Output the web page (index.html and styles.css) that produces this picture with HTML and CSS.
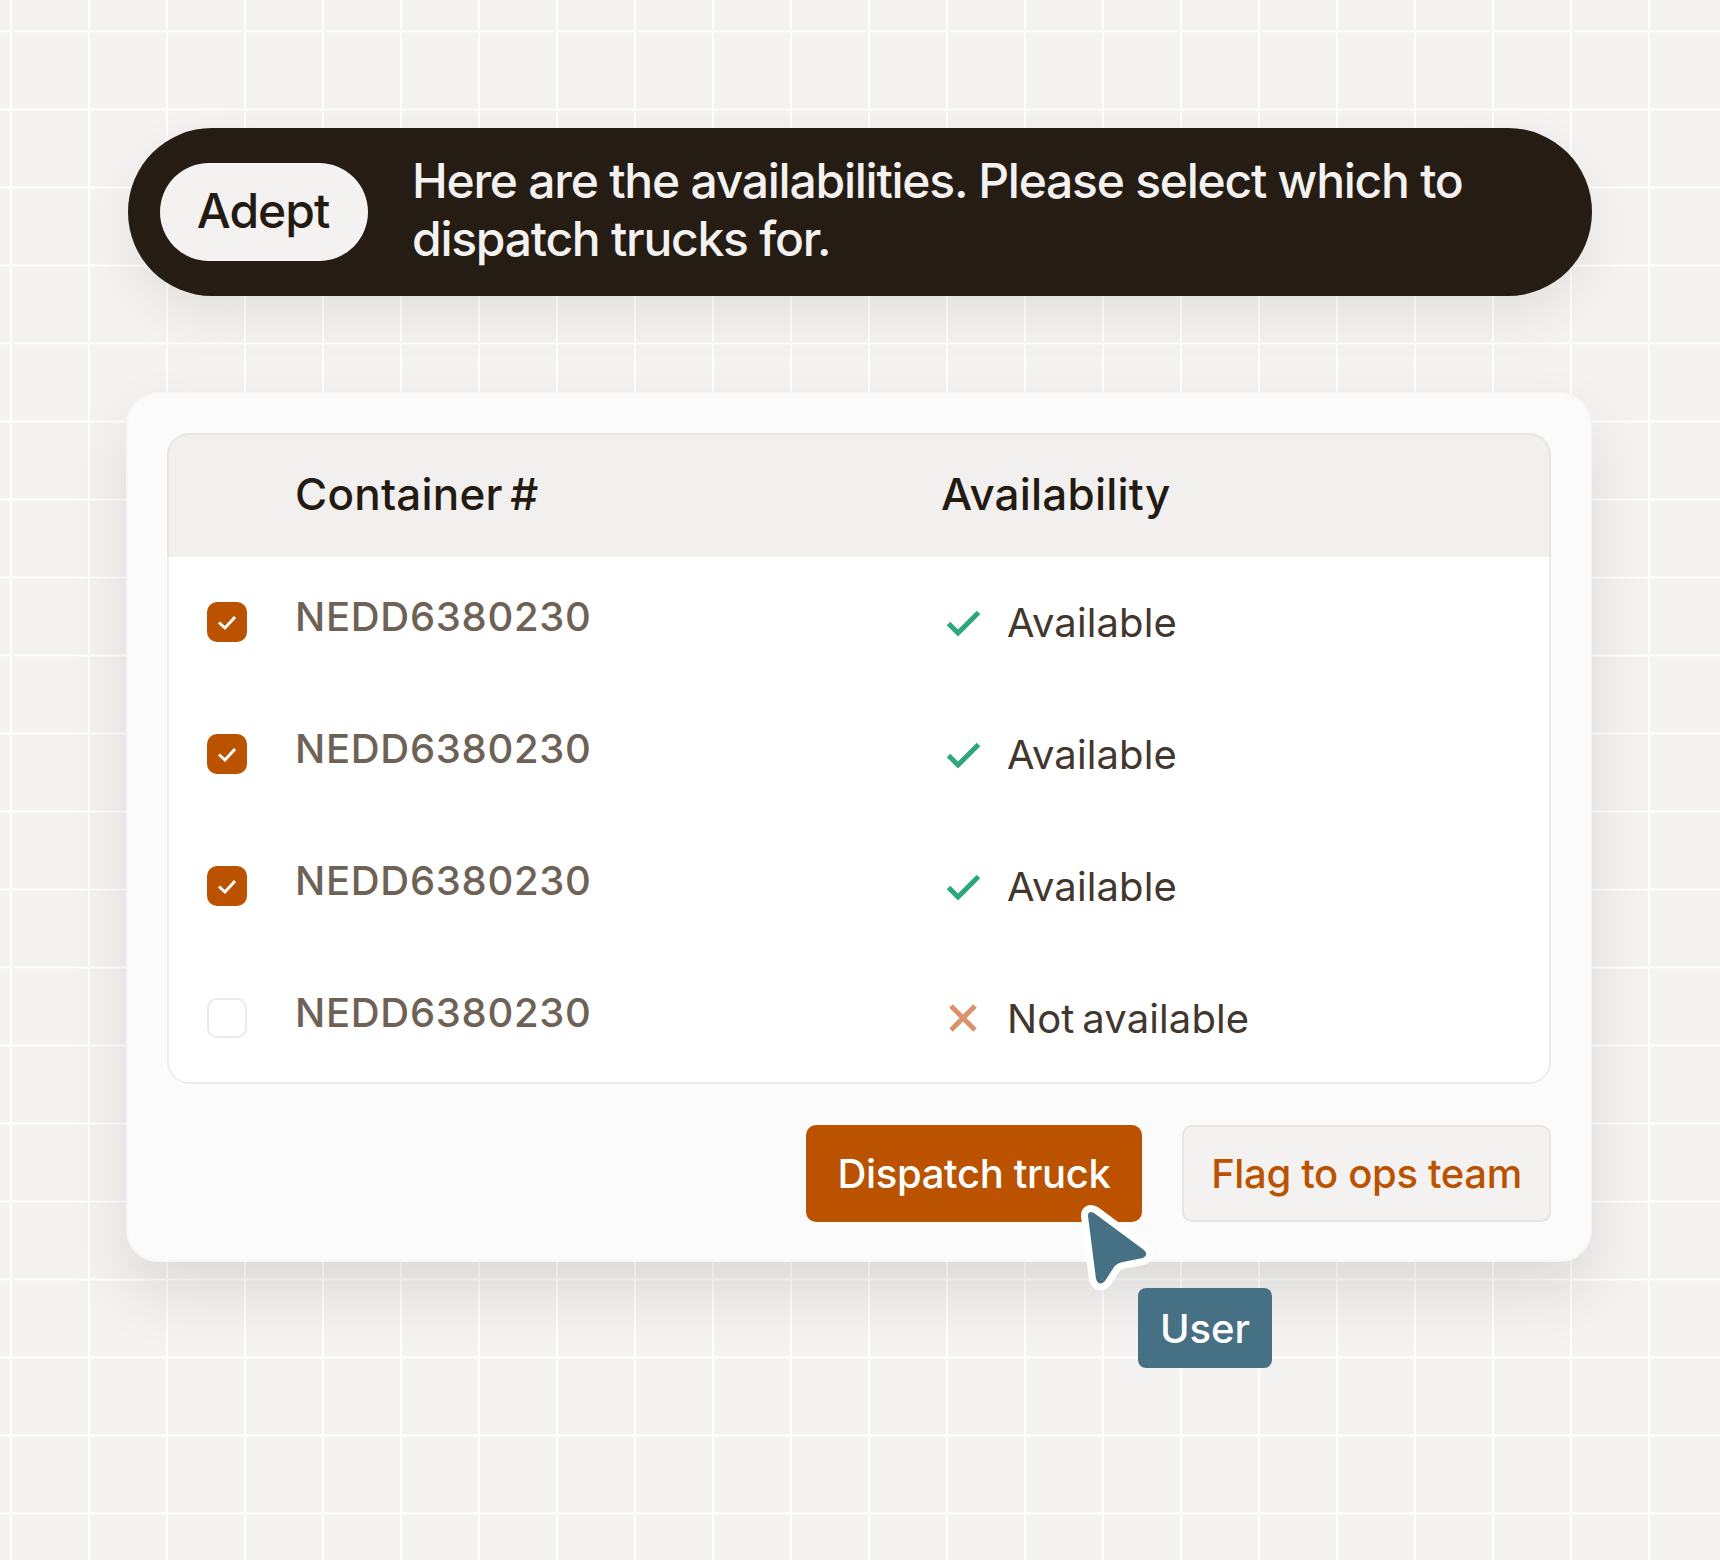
FILE: index.html
```html
<!DOCTYPE html>
<html lang="en">
<head>
<meta charset="utf-8">
<title>Adept dispatch</title>
<link rel="stylesheet" href="styles.css">
</head>
<body>
<main class="page">
  <section class="message">
    <span class="agent">Adept</span>
    <p class="message-text">Here are the availabilities. Please select which to dispatch trucks for.</p>
  </section>
  <section class="card">
    <div class="table">
      <div class="row head">
        <span></span>
        <span>Container #</span>
        <span>Availability</span>
      </div>
      <div class="rows">
        <div class="row">
          <span class="box on"><svg viewBox="0 0 40 40" class="tick"><path d="M12 20.5 L18 26 L28 15"/></svg></span>
          <span class="id">NEDD6380230</span>
          <span class="status"><svg viewBox="0 0 44 44" class="ok"><path d="M7.5 23.5 L17 33 L37.5 12.5"/></svg>Available</span>
        </div>
        <div class="row">
          <span class="box on"><svg viewBox="0 0 40 40" class="tick"><path d="M12 20.5 L18 26 L28 15"/></svg></span>
          <span class="id">NEDD6380230</span>
          <span class="status"><svg viewBox="0 0 44 44" class="ok"><path d="M7.5 23.5 L17 33 L37.5 12.5"/></svg>Available</span>
        </div>
        <div class="row">
          <span class="box on"><svg viewBox="0 0 40 40" class="tick"><path d="M12 20.5 L18 26 L28 15"/></svg></span>
          <span class="id">NEDD6380230</span>
          <span class="status"><svg viewBox="0 0 44 44" class="ok"><path d="M7.5 23.5 L17 33 L37.5 12.5"/></svg>Available</span>
        </div>
        <div class="row">
          <span class="box"></span>
          <span class="id">NEDD6380230</span>
          <span class="status"><svg viewBox="0 0 44 44" class="no"><path d="M10 10 L34 34 M34 10 L10 34"/></svg>Not available</span>
        </div>
      </div>
    </div>
    <div class="actions">
      <button class="btn primary">Dispatch truck</button>
      <button class="btn secondary">Flag to ops team</button>
      <svg class="cursor" viewBox="0 0 80 90"><path d="M9 13 Q9 7 15 10 L65 47 Q70 52 64 55 L44 59 Q38 60 35 64 L26 78 Q20 84 17 76 Z"/></svg>
      <span class="user">User</span>
    </div>
  </section>
</main>
</body>
</html>
```
FILE: styles.css
```css
* { box-sizing: border-box; }
html, body { margin: 0; }
body {
  width: 1720px;
  height: 1560px;
  overflow: hidden;
  background-color: #f4f3f1;
  background-image:
    linear-gradient(to right, #fefefe 2px, transparent 2px),
    linear-gradient(to bottom, #fefefe 2px, transparent 2px);
  background-size: 78px 78px;
  background-position: 10px 30.5px;
  font-family: Inter, "Liberation Sans", sans-serif;
  color: #231a12;
}
.page {
  padding: 128px 128px 0 128px;
  display: flex;
  flex-direction: column;
  gap: 96px;
}
.message {
  height: 168px;
  border-radius: 84px;
  background: #251c13;
  box-shadow: 0 20px 50px rgba(60, 50, 40, 0.09);
  padding: 0 32px;
  display: flex;
  align-items: center;
  gap: 44px;
}
.agent {
  flex: none;
  width: 208px;
  height: 98px;
  padding: 0 2px 4px 0;
  border-radius: 49px;
  background: #f3f2f0;
  font-size: 48px;
  font-weight: 500;
  letter-spacing: -1px;
  display: flex;
  align-items: center;
  justify-content: center;
}
.message-text {
  margin: -4px 0 0;
  color: #f3f2f0;
  font-size: 48px;
  font-weight: 500;
  line-height: 58px;
  letter-spacing: -1.25px;
}
.card {
  margin-left: -2px;
  height: 870px;
  padding: 39px;
  border: 2px solid #f7f6f6;
  border-radius: 32px;
  background: #fbfbfb;
  box-shadow: 0 30px 60px rgba(60, 50, 40, 0.12);
  display: flex;
  flex-direction: column;
  gap: 41px;
}
.table { flex: none; }
.row {
  display: grid;
  grid-template-columns: 88px 646px 1fr;
  align-items: start;
  padding: 45px 0 47px 38px;
}
.rows {
  border: 2px solid #eeedeb;
  border-top: 0;
  border-radius: 0 0 22px 22px;
  background: #fff;
}
.rows .row:last-child { padding-bottom: 44px; }
.head {
  height: 124px;
  padding: 0 0 4px 38px;
  align-items: center;
  background: #f1f0ee;
  border: 2px solid #e7e6e3;
  border-bottom: 0;
  border-radius: 22px 22px 0 0;
  font-size: 44px;
  font-weight: 500;
  letter-spacing: 0.2px;
  word-spacing: -4.4px;
}
.box {
  width: 40px;
  height: 40px;
  border: 2px solid #eceae8;
  border-radius: 10px;
  background: #fff;
}
.box.on { border: 0; background: #bb5200; }
.tick { display: block; width: 40px; height: 40px; fill: none; stroke: #fff; stroke-width: 3; }
.id {
  margin-top: -7px;
  font-size: 40px;
  font-weight: 500;
  line-height: 44px;
  letter-spacing: 0.7px;
  color: #6e6256;
}
.status {
  display: flex;
  align-items: center;
  gap: 22px;
  height: 40px;
  font-size: 40px;
  letter-spacing: 0.1px;
  word-spacing: -3.5px;
  color: #42372e;
}
.status svg { flex: none; width: 44px; height: 44px; fill: none; }
.ok { stroke: #2fa680; stroke-width: 5; }
.no { stroke: #d9926c; stroke-width: 5; }
.actions {
  position: relative;
  display: flex;
  justify-content: flex-end;
  gap: 40px;
}
.btn {
  height: 97px;
  border-radius: 10px;
  font: 500 40px Inter, "Liberation Sans", sans-serif;
  letter-spacing: -0.35px;
  padding: 0;
}
.primary { width: 336px; border: 0; background: #bb5200; color: #fff; }
.secondary { width: 369px; border: 2px solid #e6e5e3; background: #f3f2f1; color: #bb5200; }
.cursor {
  position: absolute;
  left: 912px;
  top: 78px;
  width: 80px;
  height: 90px;
  fill: #467083;
  stroke: #fff;
  stroke-width: 14;
  stroke-linejoin: round;
  paint-order: stroke;
}
.user {
  position: absolute;
  left: 971px;
  top: 163px;
  width: 134px;
  height: 80px;
  border-radius: 8px;
  background: #467083;
  color: #fff;
  font-size: 40px;
  font-weight: 500;
  display: flex;
  align-items: center;
  justify-content: center;
}
```
